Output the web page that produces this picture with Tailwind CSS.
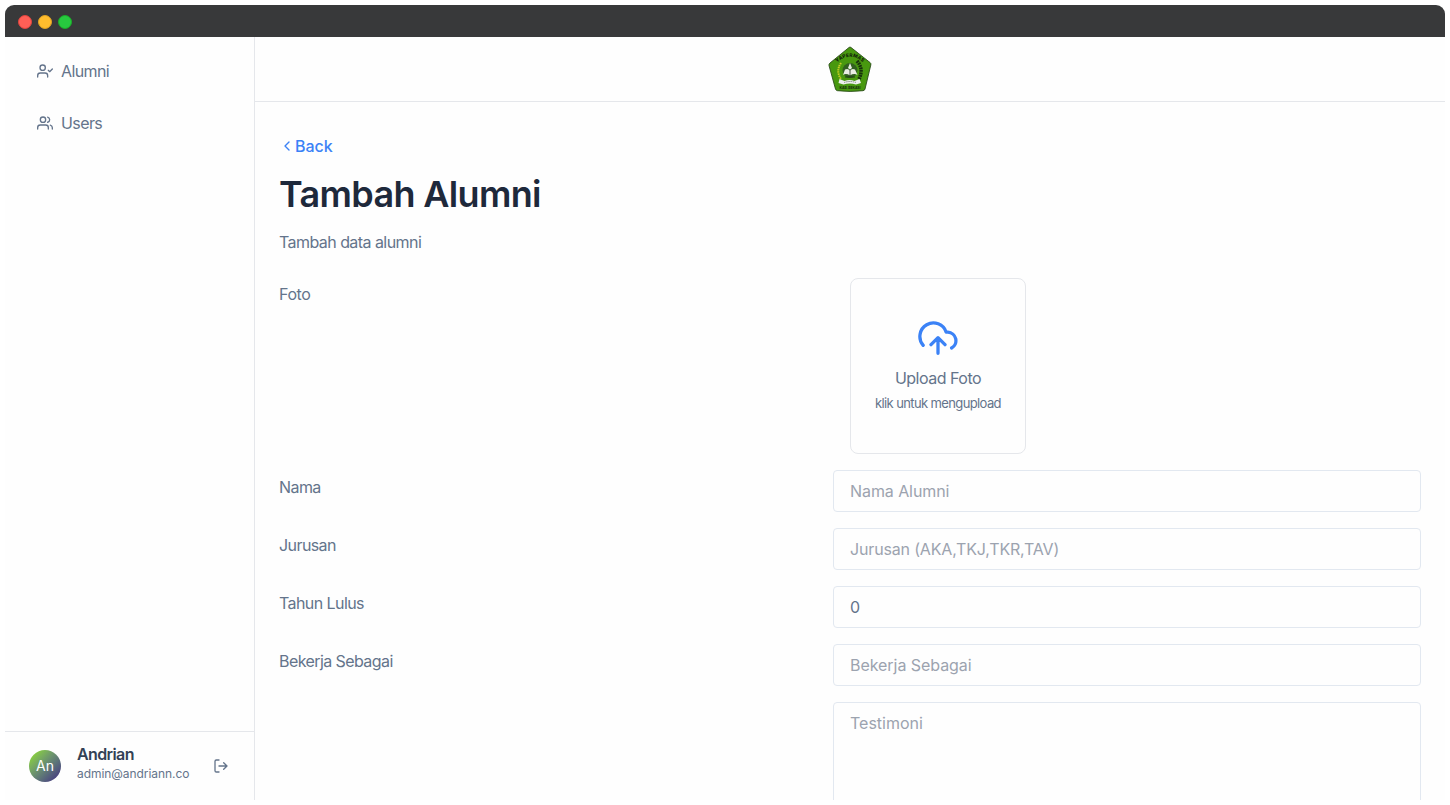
<!DOCTYPE html>
<html lang="id">
<head>
<meta charset="utf-8">
<title>Tambah Alumni</title>
<script src="https://cdn.jsdelivr.net/npm/@tailwindcss/browser@4"></script>
</head>
<body class="h-screen overflow-hidden bg-white p-[5px] font-[Inter,sans-serif] text-base text-[#64748b]">
<div class="flex h-full flex-col overflow-hidden rounded-t-[9px] bg-[#fefefe]">
  <div class="flex h-8 shrink-0 items-center gap-[6px] bg-[#38393a] px-[13px] pt-[2px]">
    <span class="size-[14px] rounded-full border border-[#e0443e] bg-[#ff5f56]"></span>
    <span class="size-[14px] rounded-full border border-[#dea123] bg-[#ffbd2e]"></span>
    <span class="size-[14px] rounded-full border border-[#1aab29] bg-[#27c93f]"></span>
  </div>
  <div class="flex min-h-0 flex-1">
    <aside class="flex w-[250px] shrink-0 flex-col border-r border-gray-200">
      <nav class="flex flex-1 flex-col gap-3 px-8 pt-[14px] tracking-[-0.6px]">
        <a class="flex h-10 items-center gap-2">
          <svg class="size-4" viewBox="0 0 24 24" fill="none" stroke="currentColor" stroke-width="2" stroke-linecap="round" stroke-linejoin="round"><path d="M16 21v-2a4 4 0 0 0-4-4H5a4 4 0 0 0-4 4v2"/><circle cx="8.500" cy="7" r="4"/><path d="m17 11 2 2 4-4"/></svg>
          <span>Alumni</span>
        </a>
        <a class="flex h-10 items-center gap-2">
          <svg class="size-4" viewBox="0 0 24 24" fill="none" stroke="currentColor" stroke-width="2" stroke-linecap="round" stroke-linejoin="round"><path d="M17 21v-2a4 4 0 0 0-4-4H5a4 4 0 0 0-4 4v2"/><circle cx="9" cy="7" r="4"/><path d="M23 21v-2a4 4 0 0 0-3-3.870M16 3.130a4 4 0 0 1 0 7.750"/></svg>
          <span>Users</span>
        </a>
      </nav>
      <div class="flex h-[69px] items-center border-t border-gray-200 px-6">
        <div class="flex size-8 items-center justify-center rounded-full bg-linear-to-br from-[#86c940] from-15% to-[#453080] to-95% text-sm text-white">An</div>
        <div class="ml-4 flex-1 pb-[5px]">
          <div class="leading-5 font-semibold tracking-[-0.6px] text-[#334155]">Andrian</div>
          <div class="pt-px text-xs leading-[18px] tracking-[-0.06px]">admin@andriann.co</div>
        </div>
        <svg class="mr-px size-4" viewBox="0 0 24 24" fill="none" stroke="currentColor" stroke-width="2" stroke-linecap="round" stroke-linejoin="round"><path d="M9 21H5a2 2 0 0 1-2-2V5a2 2 0 0 1 2-2h4M16 17l5-5-5-5M21 12H9"/></svg>
      </div>
    </aside>
    <main class="flex min-w-0 flex-1 flex-col">
      <header class="flex h-[65px] shrink-0 items-center justify-center border-b border-gray-200">
        <svg class="mr-px h-[46px] w-11" viewBox="0 0 44 46">
          <path d="M21 1.500Q22 .5 23 1.500L42 16.500Q43.300 17.500 42.800 19L37 43Q36.600 44.500 35 44.700Q22 46.200 9.500 44.700Q8 44.500 7.500 43L1 19.500Q.7 18 2 17Z" fill="#48980f" stroke="#2c4d1c" stroke-width=".9"/>
          <path id="arch" d="M9 16.500Q22 5 35 16.500" fill="none"/>
          <text font-size="4.800" font-weight="800" fill="#12240a" letter-spacing=".2"><textPath href="#arch" startOffset="50%" text-anchor="middle">YAPERMAS</textPath></text>
          <path d="M13 17Q7.500 25 13 33" fill="none" stroke="#c5cc25" stroke-width="2" stroke-dasharray="1.500 .7"/>
          <path d="M29 15Q36 23 31 33" fill="none" stroke="#17300c" stroke-width="3.500" stroke-dasharray="1.800 .7"/>
          <circle cx="22" cy="24.500" r="7.500" fill="#315f20"/>
          <path d="M22 29.500Q18 27 15 29L17 23.500Q20 22 22 24.500Q24 22 27 23.500L29.500 29Q26 27 22 29.500ZM22 17l2 5-2 1.500-2-1.500Z" fill="#e9ede4"/>
          <path d="M22 24v6M17 31h10" stroke="#172b13" stroke-width=".8"/>
          <path d="m11.500 33 5 2q5-1.800 10 0l5-2 1.500 4-5 1.500q-6-2-12.500 0L10.500 37Z" fill="#edf0ec"/>
          <path d="M16 36.500q6-2 12 0" fill="none" stroke="#6b7566" stroke-width=".8" stroke-dasharray="1.500 .7"/>
          <text x="22" y="43" text-anchor="middle" font-size="3.300" font-weight="700" fill="#12240a">KAB. BEKASI</text>
        </svg>
      </header>
      <section class="flex-1 overflow-hidden px-6 pt-8">
        <a class="flex h-6 items-center font-medium text-[#3b82f6]">
          <svg class="size-4" viewBox="0 0 24 24" fill="none" stroke="currentColor" stroke-width="2" stroke-linecap="round" stroke-linejoin="round"><path d="m15 18-6-6 6-6"/></svg>Back
        </a>
        <h1 class="mt-4 text-4xl leading-10 font-semibold tracking-[-0.65px] text-[#1e293b]">Tambah Alumni</h1>
        <p class="mt-4 tracking-[-0.56px]">Tambah data alumni</p>
        <div class="mt-6 grid grid-cols-[554px_1fr] gap-y-4 tracking-[-0.58px]">
          <div class="pt-1 tracking-tight">Foto</div>
          <div class="ml-[17px] flex size-44 flex-col items-center rounded-lg border border-gray-200 pt-[42px]">
            <svg class="h-[34px] w-10 text-[#3b82f6]" viewBox="0 0 40 34" fill="none" stroke="currentColor" stroke-width="3.300" stroke-linecap="round" stroke-linejoin="round"><path d="M5.200 24.300A13.500 13.500 0 1 1 28.200 11.200H29.900A8.450 8.450 0 0 1 33.600 27M20 32.300V16.800M13 23.700l7-7 7 7"/></svg>
            <div class="mt-[11px] tracking-[-0.5px]">Upload Foto</div>
            <div class="mt-1 text-[13px] leading-[18px] tracking-[-0.62px]">klik untuk mengupload</div>
          </div>
          <div class="pt-[5px]">Nama</div>
          <input class="h-[42px] rounded-[4px] border border-[#e2e8f0] px-4 tracking-[-0.08px] placeholder:text-[#9ca3af]" placeholder="Nama Alumni">
          <div class="pt-[5px]">Jurusan</div>
          <input class="h-[42px] rounded-[4px] border border-[#e2e8f0] px-4 tracking-[-0.16px] placeholder:text-[#9ca3af]" placeholder="Jurusan (AKA,TKJ,TKR,TAV)">
          <div class="pt-[5px]">Tahun Lulus</div>
          <input class="h-[42px] rounded-[4px] border border-[#e2e8f0] px-4 tracking-normal" value="0">
          <div class="pt-[5px]">Bekerja Sebagai</div>
          <input class="h-[42px] rounded-[4px] border border-[#e2e8f0] px-4 tracking-[-0.05px] placeholder:text-[#9ca3af]" placeholder="Bekerja Sebagai">
          <div></div>
          <textarea class="h-[150px] resize-none rounded-[4px] border border-[#e2e8f0] px-4 py-2 tracking-normal placeholder:text-[#9ca3af]" placeholder="Testimoni"></textarea>
        </div>
      </section>
    </main>
  </div>
</div>
</body>
</html>
